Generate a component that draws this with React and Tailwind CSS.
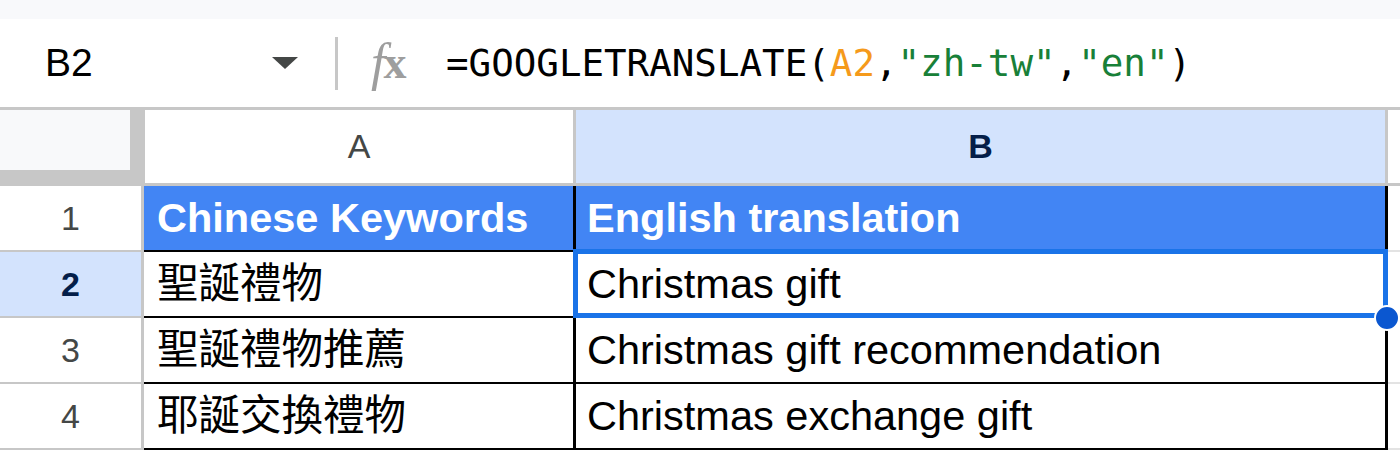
import React from "react";

const rows = [
  { n: "1", a: "Chinese Keywords", b: "English translation", head: true },
  { n: "2", a: "聖誕禮物", b: "Christmas gift", active: true },
  { n: "3", a: "聖誕禮物推薦", b: "Christmas gift recommendation" },
  { n: "4", a: "耶誕交換禮物", b: "Christmas exchange gift" },
];

const cellFont = "font-['Liberation_Sans','Noto_Sans_CJK_TC',sans-serif]";

const Row = ({ row }) => (
  <div className="flex h-[66px] shrink-0">
    <div
      className={`w-[144px] shrink-0 flex items-center justify-center border-r-[3px] border-b-2 border-[#c7c7c7] text-[34px] ${
        row.active ? "bg-[#d3e3fd] font-bold text-[#041e49]" : "bg-white text-[#444746]"
      }`}
    >
      {row.n}
    </div>
    <div
      className={`w-[432px] shrink-0 flex items-center pl-[13px] border-r-[3px] border-b-2 border-black text-[41.5px] ${cellFont} ${
        row.head ? "bg-[#4285f4] text-white font-bold" : "bg-white text-black"
      }`}
    >
      {row.a}
    </div>
    <div
      className={`w-[812px] shrink-0 flex items-center pl-[11px] border-r-[3px] border-b-2 border-black text-[41.5px] ${cellFont} ${
        row.head ? "bg-[#4285f4] text-white font-bold" : "bg-white text-black"
      }`}
    >
      {row.b}
    </div>
    <div className="flex-1 border-b-2 border-[#e3e3e3] bg-white" />
  </div>
);

export default function App() {
  return (
    <div className="w-[1400px] h-[453px] overflow-hidden bg-white flex flex-col font-['Liberation_Sans',sans-serif]">
      <div className="h-[19px] shrink-0 bg-[#f8f9fb]" />

      {/* formula bar */}
      <div className="h-[88px] shrink-0 flex items-center">
        <div className="w-[272px] pl-[45px] text-[39px] text-black">B2</div>
        <svg width="26" height="12" viewBox="0 0 26 12" className="shrink-0">
          <path d="M0 0 L26 0 L13 12 Z" fill="#444746" />
        </svg>
        <div className="ml-[37px] w-[3px] h-[53px] bg-[#c7c7c7] shrink-0" />
        <div className="ml-[33px] w-[75px] flex items-center text-[#9e9e9e] font-['Liberation_Serif',serif] text-[52px] leading-none">
          <span className="italic">f</span>
          <span className="font-bold -ml-[2px] text-[46px]">x</span>
        </div>
        <div className="font-['DejaVu_Sans_Mono',monospace] text-[37.5px] text-black whitespace-pre">
          =GOOGLETRANSLATE(<span className="text-[#f59a1b]">A2</span>,
          <span className="text-[#188038]">"zh-tw"</span>,
          <span className="text-[#188038]">"en"</span>)
        </div>
      </div>

      <div className="h-[3px] shrink-0 bg-[#c7c7c7]" />

      {/* column headers */}
      <div className="flex h-[76px] shrink-0">
        <div className="w-[145px] shrink-0 bg-[#c7c7c7]">
          <div className="w-[130px] h-[60px] bg-[#f8f9fa]" />
        </div>
        <div className="w-[431px] shrink-0 flex items-center justify-center border-r-[3px] border-b-[3px] border-[#c7c7c7] bg-white text-[34px] text-[#444746]">
          A
        </div>
        <div className="w-[812px] shrink-0 flex items-center justify-center border-r-[3px] border-b-[3px] border-[#c7c7c7] bg-[#d3e3fd] text-[34px] font-bold text-[#041e49]">
          B
        </div>
        <div className="flex-1 border-b-[3px] border-[#c7c7c7] bg-white" />
      </div>

      {/* grid */}
      <div className="relative flex flex-col">
        {rows.map((r) => (
          <Row key={r.n} row={r} />
        ))}
        {/* active cell selection */}
        <div className="absolute left-[573px] top-[63px] w-[815px] h-[69px] border-[5px] border-[#1a73e8] pointer-events-none" />
        <div className="absolute left-[1374px] top-[119px] w-[26px] h-[26px] rounded-full bg-[#0b57d0] border-2 border-white" />
      </div>
    </div>
  );
}
